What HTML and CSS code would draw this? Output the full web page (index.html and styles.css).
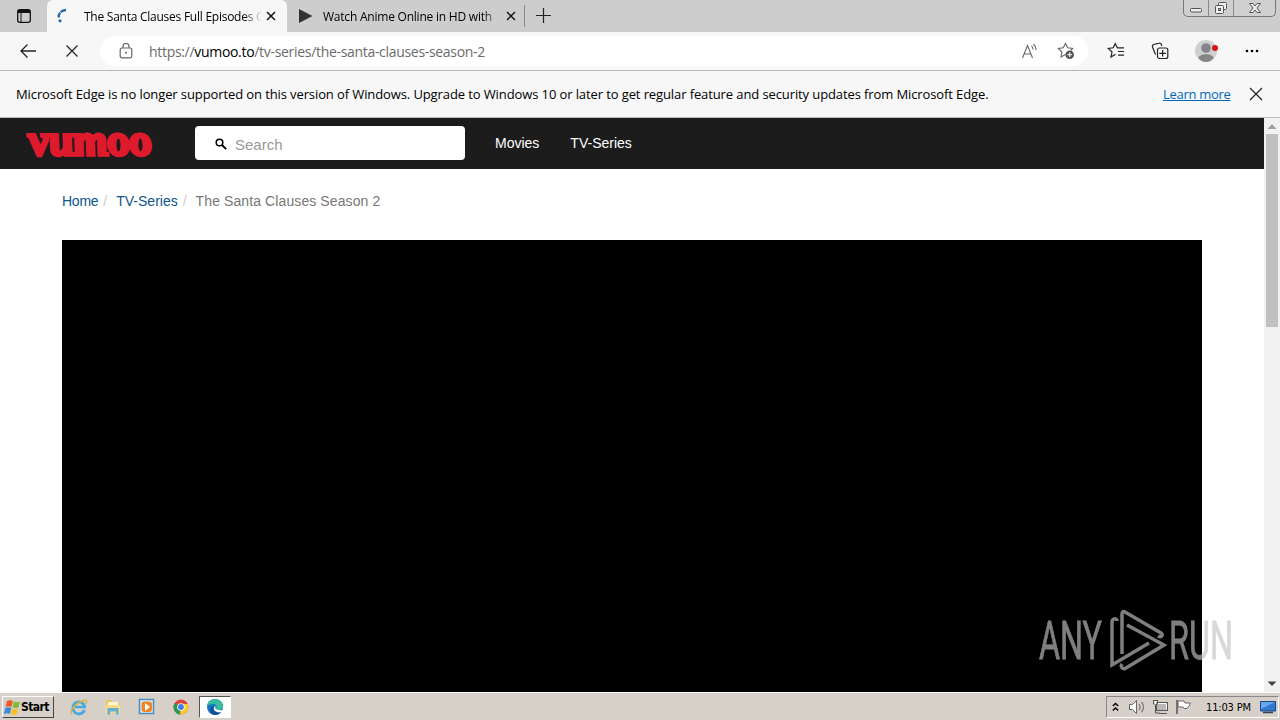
FILE: index.html
```html
<!DOCTYPE html>
<html lang="en">
<head>
    <meta charset="UTF-8">
    <meta name="viewport" content="width=device-width, initial-scale=1.0">
    <title>The Santa Clauses Full Episodes Online</title>
    <link rel="stylesheet" href="styles.css">
</head>
<body>
    <div class="tabs">
        <div class="tab-menu">
            <svg width="16" height="16" viewBox="0 0 16 16"><rect x="1.700" y="1.700" width="12.600" height="12.600" rx="2" fill="none" stroke="#111" stroke-width="1.300"/><path d="M2 2h12v3H2z" fill="#111"/><path d="M5 5v9" stroke="#111"/></svg>
        </div>
        <div class="tab active">
            <svg class="tab-icon" width="16" height="16" viewBox="0 0 16 16"><path d="M3.700 9.500C3.500 5.500 6 2.300 11 2" fill="none" stroke="#2869a8" stroke-width="2.400" stroke-dasharray="5 .8 9"/><circle cx="5" cy="12.800" r="1.600" fill="#2869a8"/></svg>
            <span class="tab-title title-one">The Santa Clauses Full Episodes O</span>
            <svg class="tab-close" width="10" height="10" viewBox="0 0 10 10"><path d="M1 1l8 8M9 1l-8 8" stroke="#111" stroke-width="1.5"/></svg>
        </div>
        <div class="tab">
            <svg class="tab-icon" width="16" height="16" viewBox="0 0 16 16"><path d="M1 1l13.500 7L1 15z" fill="#333"/></svg>
            <span class="tab-title title-two">Watch Anime Online in HD with</span>
            <svg class="tab-close" width="10" height="10" viewBox="0 0 10 10"><path d="M1 1l8 8M9 1l-8 8" stroke="#111" stroke-width="1.4"/></svg>
        </div>
        <svg class="new-tab" width="15" height="15" viewBox="0 0 15 15"><path d="M7.500 0v15M0 7.500h15" stroke="#222" stroke-width="1.200"/></svg>
        <div class="window-buttons">
            <span class="min"><svg width="14" height="16" viewBox="0 0 14 16"><rect x="1.500" y="8.500" width="11" height="3.500" rx="1" fill="#eee" stroke="#555"/></svg></span>
            <span class="max"><svg width="14" height="16" viewBox="0 0 14 16"><rect x="4.500" y="2.500" width="8" height="7" rx="1" fill="#eee" stroke="#555"/><rect x="1.500" y="5.500" width="8" height="8" rx="1" fill="#eee" stroke="#555"/><rect x="4.500" y="8.500" width="2" height="2" fill="#ccc" stroke="#555"/></svg></span>
            <span class="close"><svg width="14" height="16" viewBox="0 0 14 16"><path d="M1.500 3.500H5l2 2.500 2-2.500h3.500L9 8l3.500 4.500H9L7 10l-2 2.500H1.500L5 8z" fill="#eee" stroke="#555"/></svg></span>
        </div>
    </div>

    <div class="toolbar">
        <svg class="back" width="18" height="16" viewBox="0 0 18 16"><path d="M17 8H2M8.500 1.500L2 8l6.500 6.500" fill="none" stroke="#222" stroke-width="1.300"/></svg>
        <svg class="stop" width="12" height="12" viewBox="0 0 12 12"><path d="M.5.5l11 11M11.500.5l-11 11" stroke="#222" stroke-width="1.200"/></svg>
        <div class="address">
            <svg class="lock" width="14" height="16" viewBox="0 0 14 16"><rect x="1.200" y="5" width="11.600" height="9.800" rx="1.800" fill="none" stroke="#666" stroke-width="1.200"/><path d="M4 5V3.500a3 3 0 0 1 6 0V5" fill="none" stroke="#666" stroke-width="1.200"/><circle cx="7" cy="9.800" r="1" fill="#666"/></svg>
            <span class="url">https://<b>vumoo.to</b>/tv-series/the-santa-clauses-season-2</span>
            <svg class="read" width="18" height="18" viewBox="0 0 18 18"><path d="M1.500 16L6.500 3.500l5 12.500M3.200 12h6.600M10.500 4c1 .8 1.500 2 1.500 3.500M12.500 2c1.600 1.500 2.600 3.200 2.600 6" fill="none" stroke="#666" stroke-width="1.100"/></svg>
            <svg class="add-star" width="18" height="18" viewBox="0 0 18 18"><path d="M8.500 12.500L4 15l.9-5L1.300 6.500l4.900-.7L8.500 1.500l2.200 4.300 5 .7-2 2" fill="none" stroke="#666" stroke-width="1.100"/><circle cx="12.700" cy="12.700" r="4.300" fill="#555"/><path d="M12.700 10.300v4.800M10.300 12.700h4.800" stroke="#fff"/></svg>
        </div>
        <svg class="favorites" width="18" height="18" viewBox="0 0 18 18"><path d="M8.500 12.200L4 15l1-5L1.300 6.500l4.900-.7L8.200 1.500l2.200 4.300h6.600M11 9.500h6M11 13.200h6" fill="none" stroke="#222" stroke-width="1.200"/></svg>
        <svg class="collections" width="18" height="18" viewBox="0 0 18 18"><path d="M4.500 12.500L1.500 5a2 2 0 0 1 1.300-2.500L8 1.200a2 2 0 0 1 2.500 1.500l.4 1.300" fill="none" stroke="#222" stroke-width="1.200"/><rect x="6.500" y="6" width="10.300" height="10.500" rx="2" fill="none" stroke="#222" stroke-width="1.200"/><path d="M11.600 8v6.500M8.300 11.300h6.600" stroke="#222" stroke-width="1.200"/></svg>
        <svg class="profile" width="24" height="24" viewBox="0 0 24 24"><circle cx="12" cy="12" r="11" fill="#cfcfcf"/><circle cx="12" cy="9" r="4.800" fill="#858585"/><path d="M4.500 19c1-5 14-5 15 0-3.500 5.200-11.500 5.200-15 0z" fill="#858585"/><circle cx="21" cy="9" r="3" fill="#d8121d"/></svg>
        <svg class="more" width="14" height="4" viewBox="0 0 14 4"><circle cx="2" cy="2" r="1.300"/><circle cx="7" cy="2" r="1.300"/><circle cx="12" cy="2" r="1.300"/></svg>
    </div>

    <div class="notice">
        <span class="notice-text">Microsoft Edge is no longer supported on this version of Windows. Upgrade to Windows 10 or later to get regular feature and security updates from Microsoft Edge.</span>
        <a class="learn" href="#">Learn more</a>
        <svg width="14" height="14" viewBox="0 0 14 14"><path d="M1 1l12 12M13 1L1 13" stroke="#222" stroke-width="1.200"/></svg>
    </div>

    <div class="viewport">
        <div class="page">
            <header class="header">
                <div class="logo">vumoo</div>
                <div class="search">
                    <svg width="12" height="12" viewBox="0 0 12 12"><circle cx="4.500" cy="4.500" r="3.300" fill="none" stroke="#000" stroke-width="1.500"/><path d="M7 7l4.200 4.200" stroke="#000" stroke-width="1.900"/></svg>
                    <span>Search</span>
                </div>
                <nav class="nav">
                    <a href="#">Movies</a>
                    <a href="#">TV-Series</a>
                </nav>
            </header>
            <div class="breadcrumb">
                <a class="crumb-home" href="#">Home</a><i>/</i>
                <a class="crumb-series" href="#">TV-Series</a><i>/</i>
                <span class="crumb-current">The Santa Clauses Season 2</span>
            </div>
            <div class="player"></div>
        </div>
        <div class="scrollbar">
            <svg width="16" height="16" viewBox="0 0 16 16"><path d="M3.500 11L8 6l4.500 5z" fill="#a0a0a0"/></svg>
            <div class="thumb"></div>
            <svg class="down" width="16" height="16" viewBox="0 0 16 16"><path d="M3.500 5.500h9L8 10z" fill="#444"/></svg>
        </div>
        <svg class="watermark" width="200" height="66" viewBox="0 0 200 66">
            <g class="mark-text">
                <text x="3" y="52" textLength="63" lengthAdjust="spacingAndGlyphs">ANY</text>
                <text x="133" y="52" textLength="64" lengthAdjust="spacingAndGlyphs">RUN</text>
            </g>
            <g class="mark-logo">
                <path d="M81 14c0-3-5-3-5 1v43l37-22"/>
                <path d="M86 47V7c0-2 1-3 3-2l36 21c3 2 0 5-3 3"/>
                <path d="M91 18l37 20-38 23c-3 2-6-1-4-4"/>
            </g>
        </svg>
    </div>

    <div class="taskbar">
        <div class="start">
            <svg width="17" height="17" viewBox="0 0 17 17"><path d="M3 2c2-1 4-1 6 0L7.500 8c-2-1-4-1-6 0z" fill="#ed5a27"/><path d="M10 2.500c2 1 4 1 6 0L14.500 8.300c-2 1-4 1-6 0z" fill="#7dbb38"/><path d="M1.300 9c2-1 4-1 6 0L5.700 15c-2-1-4-1-6 0z" fill="#3b8bd6"/><path d="M8.200 9.500c2 1 4 1 6 0l-1.500 5.800c-2 1-4 1-6 0z" fill="#f8bf27"/></svg>
            <span>Start</span>
        </div>
        <div class="quick">
            <svg width="18" height="18" viewBox="0 0 18 18"><path d="M14.500 12a6 6 0 1 1 .3-3H5" fill="none" stroke="#45a9e2" stroke-width="2.700"/><path d="M2 16c-3-2 2-9 8-12s8-2 6 2" fill="none" stroke="#e0b13a" stroke-width="1.400"/></svg>
            <svg width="18" height="18" viewBox="0 0 18 18"><path d="M2 2h5l1 2h7v10H2z" fill="#e6c467"/><path d="M4 4h10v5H4z" fill="#fff6c9"/><path d="M1.500 7h14.500v8H1.500z" fill="#f5dc87"/><path d="M3.500 16.500V10h11v6.500H12v-3H6v3z" fill="#62afd5"/></svg>
            <svg width="18" height="18" viewBox="0 0 18 18"><rect x="1.500" y="1.500" width="14" height="14" fill="#dcecf8" stroke="#4b8cc4" stroke-width="1.500"/><rect x="3.500" y="3.500" width="10.500" height="10.500" rx="3" fill="#f58220"/><path d="M7 5l5 4-5 4z" fill="#fff"/></svg>
            <svg width="18" height="18" viewBox="0 0 18 18"><circle cx="9" cy="9" r="7.500" fill="#db4437"/><path d="M9 9L2.500 5.300A7.500 7.500 0 0 0 8 16.500z" fill="#269a54"/><path d="M9 9l-1 7.500A7.500 7.500 0 0 0 15.800 6H9z" fill="#fbc928"/><circle cx="9" cy="9" r="3.800" fill="#fff"/><circle cx="9" cy="9" r="2.900" fill="#3f7ee8"/></svg>
            <div class="running">
                <svg width="18" height="18" viewBox="0 0 18 18"><circle cx="9" cy="9" r="8" fill="#1576c4"/><path d="M1 8C2-1 17-1 17 8c0 4-5 5-7 3 2-3-1-6-4-5-2 0-4 1-5 2z" fill="#36bd9c"/><path d="M8 8c-3 4 1 8 7 6-1 2-4 3-6 3-6-1-6-8-1-9z" fill="#124c92"/><path d="M10 8c-2 2 0 5 7 4l-1.500 2c-4 1-8-1-7.500-4 0-1 1-2 2-2z" fill="#fff"/></svg>
            </div>
        </div>
        <div class="tray">
            <svg class="chevrons" width="7" height="10" viewBox="0 0 7 10"><path d="M.8 4l2.700-2.500L6.200 4M.8 8.500L3.500 6l2.700 2.500" fill="none" stroke="#000" stroke-width="1.400"/></svg>
            <svg class="volume" width="18" height="16" viewBox="0 0 18 16"><path d="M1.500 5.500h3l4-4v13l-4-4h-3z" fill="#fff" stroke="#666"/><path d="M11 5c1.500 2 1.500 4 0 6M13.500 3c2.500 3 2.500 7 0 10" fill="none" stroke="#777" stroke-width="1.200"/></svg>
            <svg class="network" width="17" height="16" viewBox="0 0 17 16"><rect x="4.500" y="3.500" width="11" height="8" fill="#b8b8b8" stroke="#555"/><path d="M5.500 4.500h9v6" fill="none" stroke="#fff"/><path d="M7 14.500h8M3.500 6v8h4M1.500 1v4h4V1M1 1.500h5" fill="none" stroke="#555"/><path d="M2.500 2h2v3h-2z" fill="#fff"/></svg>
            <svg class="flag" width="17" height="16" viewBox="0 0 17 16"><path d="M2 1v14" stroke="#555" stroke-width="1.500"/><path d="M3 2h6l1 2h5.500L14 7l-2 2.500H9L8 8H3z" fill="#fff" stroke="#666"/></svg>
            <span class="clock">11:03 PM</span>
            <svg class="desktop" width="16" height="16" viewBox="0 0 16 16"><path d="M.5 2.500h15v9.500h-15z" fill="#3478cf" stroke="#1d4686"/><path d="M1 3h14L1 10z" fill="#65a9ec"/><path d="M3 13.500h10" stroke="#345" stroke-width="1.500"/></svg>
        </div>
    </div>
</body>
</html>
```
FILE: styles.css
```css
* {
    box-sizing: border-box;
}

body {
    margin: 0;
    width: 1280px;
    height: 720px;
    overflow: hidden;
    display: flex;
    flex-direction: column;
    font-family: "Open Sans", "Noto Sans", sans-serif;
    font-size: 12px;
    color: #000;
    background-color: #fff;
}

svg {
    display: block;
    flex-shrink: 0;
}

a {
    text-decoration: none;
}

/* Browser window */
.tabs {
    height: 32px;
    display: flex;
    align-items: flex-start;
    background-color: #cdcdcd;
}

.tab-menu {
    width: 47px;
    padding: 8px 0 0 16px;
}

.tab {
    width: 238px;
    height: 32px;
    display: flex;
    align-items: center;
    padding-left: 11px;
}

.tab.active {
    width: 240px;
    padding-left: 8px;
    border-radius: 6px 6px 0 0;
    background-color: #f7f7f7;
}

.tab-title {
    width: 178px;
    margin-left: 13px;
    white-space: nowrap;
    -webkit-mask-image: linear-gradient(to right, #000 160px, transparent 178px);
    mask-image: linear-gradient(to right, #000 160px, transparent 178px);
}

.title-one {
    letter-spacing: -0.25px;
}

.title-two {
    width: 175px;
    margin-left: 9px;
    letter-spacing: -0.22px;
}

.tab-close {
    margin-left: 4px;
}

.title-two + .tab-close {
    margin-left: 8px;
}

.new-tab {
    margin: 8px 0 0 11px;
}

.tab:not(.active) {
    border-right: 1px solid transparent;
    border-image: linear-gradient(transparent 6px, #888 6px, #888 26px, transparent 26px) 1;
}

.window-buttons {
    display: flex;
    height: 17px;
    margin-left: auto;
    margin-right: 4px;
    border: 1px solid #777;
    border-top: 0;
    border-radius: 0 0 5px 5px;
    background-color: #d0d0d0;
}

.window-buttons span {
    display: flex;
    justify-content: center;
    width: 25px;
    height: 16px;
    border-right: 1px solid #888;
}

.window-buttons .close {
    width: 41px;
    border-right: 0;
}

.toolbar {
    height: 39px;
    display: flex;
    align-items: center;
    padding-left: 19px;
    border-bottom: 1px solid #b9b9b9;
    background-color: #f7f7f7;
}

.stop {
    margin-left: 29px;
}

.address {
    width: 988px;
    height: 30px;
    display: flex;
    align-items: center;
    margin-left: 22px;
    padding-left: 19px;
    border-radius: 15px;
    background-color: #fff;
}

.url {
    width: 860px;
    margin-left: 16px;
    font-size: 14px;
    letter-spacing: -0.31px;
    color: #6b6b6b;
}

.url b {
    font-weight: normal;
    color: #000;
}

.read {
    margin-left: 12px;
}

.add-star {
    margin-left: 18px;
}

.favorites {
    margin-left: 19px;
}

.collections {
    margin-left: 26px;
}

.profile {
    margin-left: 25px;
}

.more {
    margin-left: 27px;
}

.notice {
    height: 47px;
    display: flex;
    align-items: center;
    padding: 0 17px 1px 16px;
    border-bottom: 1px solid #b9b9b9;
    background-color: #f7f7f7;
    font-size: 13px;
    white-space: nowrap;
}

.notice-text {
    width: 1147px;
    letter-spacing: -0.105px;
}

.learn {
    width: 86px;
    letter-spacing: -0.3px;
    color: #0067b8;
    text-decoration: underline;
}

/* Site */
.viewport {
    position: relative;
    height: 574px;
    display: flex;
    font-family: "Liberation Sans", Arial, sans-serif;
}

.page {
    width: 1264px;
    overflow: hidden;
}

.header {
    height: 51px;
    display: flex;
    align-items: center;
    padding-bottom: 1px;
    background-color: #1c1c1c;
}

.logo {
    width: 166px;
    height: 50px;
    margin-left: 29px;
    font-family: "Liberation Serif", serif;
    font-size: 44px;
    font-style: italic;
    font-weight: bold;
    line-height: 46px;
    color: #e01a2d;
    -webkit-text-stroke: 3.5px #e01a2d;
    transform: skewX(12deg);
}

.search {
    width: 270px;
    height: 34px;
    display: flex;
    align-items: center;
    gap: 8px;
    padding: 2px 0 0 20px;
    border-radius: 4px;
    background-color: #fff;
    font-size: 15px;
    color: #999;
}

.nav {
    display: flex;
    gap: 31px;
    margin-left: 30px;
    font-size: 14px;
}

.nav a {
    color: #fff;
}

.breadcrumb {
    height: 71px;
    display: flex;
    padding: 24px 62px 0;
    font-size: 14px;
    line-height: 17px;
    color: #777;
}

.breadcrumb a {
    color: #0e5590;
}

.breadcrumb i {
    margin: 0 9px 0 5px;
    font-style: normal;
    color: #ccc;
}

.crumb-home {
    letter-spacing: -0.25px;
}

.crumb-current {
    letter-spacing: 0.1px;
}

.player {
    width: 1140px;
    height: 452px;
    margin-left: 62px;
    background-color: #000;
}

.scrollbar {
    width: 16px;
    display: flex;
    flex-direction: column;
    background-color: #f1f1f1;
}

.thumb {
    width: 12px;
    height: 193px;
    margin-left: 2px;
    background-color: #c1c1c1;
}

.down {
    margin-top: auto;
}

.watermark {
    position: absolute;
    left: 1036px;
    top: 489px;
    opacity: 0.65;
}

.mark-text {
    font-family: Roboto, sans-serif;
    font-size: 54px;
    fill: #c4c4c4;
    stroke: #c4c4c4;
    stroke-width: 0.8px;
}

.mark-logo {
    fill: none;
    stroke: #c4c4c4;
    stroke-width: 3.5px;
}

/* Windows taskbar */
.taskbar {
    height: 28px;
    display: flex;
    align-items: center;
    padding: 1px 1px 0 2px;
    border-top: 1px solid #fff;
    background-color: #d6d0c8;
    font-family: "DejaVu Sans Condensed", "DejaVu Sans", sans-serif;
}

.start {
    width: 52px;
    height: 22px;
    display: flex;
    align-items: center;
    padding-left: 1px;
    border: 1px solid #fff;
    border-right-color: #444;
    border-bottom-color: #444;
    font-size: 12px;
    font-weight: bold;
    letter-spacing: -0.6px;
}

.quick {
    display: flex;
    align-items: center;
    gap: 16px;
    margin-left: 16px;
}

.running {
    width: 32px;
    height: 22px;
    display: flex;
    align-items: center;
    justify-content: center;
    margin-left: -7px;
    border: 1px solid #555;
    border-right-color: #fff;
    border-bottom-color: #fff;
    background-color: #fff;
}

.tray {
    width: 173px;
    height: 22px;
    display: flex;
    align-items: center;
    margin-left: auto;
    padding-left: 5px;
    border: 1px solid #888;
    border-right-color: #fff;
    border-bottom-color: #fff;
    font-size: 11px;
}

.volume {
    margin-left: 9px;
}

.network {
    margin-left: 6px;
}

.flag {
    margin-left: 6px;
}

.clock {
    width: 54px;
    margin-left: 14px;
    white-space: nowrap;
    letter-spacing: -0.15px;
}
```
